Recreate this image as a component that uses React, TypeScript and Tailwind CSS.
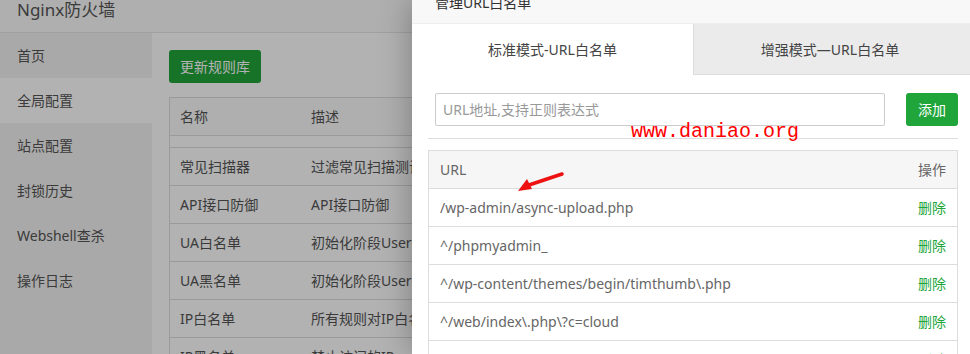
const FONT = { fontFamily: '"Noto Sans", "Noto Sans CJK SC", sans-serif' };

const MENU = ["首页", "全局配置", "站点配置", "封锁历史", "Webshell查杀", "操作日志"];

const RULES: [string, string][] = [
  ["常见扫描器", "过滤常见扫描测试工具的渗透测试"],
  ["API接口防御", "API接口防御"],
  ["UA白名单", "初始化阶段User-Agent白名单"],
  ["UA黑名单", "初始化阶段User-Agent黑名单"],
  ["IP白名单", "所有规则对IP白名单无效"],
  ["IP黑名单", "禁止访问的IP"],
];

const URLS = [
  "/wp-admin/async-upload.php",
  "^/phpmyadmin_",
  "^/wp-content/themes/begin/timthumb\\.php",
  "^/web/index\\.php\\?c=cloud",
  "^/admin/index\\.php",
];

function Background() {
  return (
    <div className="flex h-full w-full flex-col bg-white">
      <div className="h-[33px] shrink-0 border-b border-[#e5e5e5] bg-[#fbfbfb] pl-[17px] text-[17px] leading-[20px] text-[#555]">
        Nginx防火墙
      </div>
      <div className="flex flex-1">
        <div className="w-[152px] shrink-0 bg-[#f2f2f2]">
          {MENU.map((m, i) => (
            <div
              key={m}
              className={`h-[45px] pl-[17px] text-[14px] leading-[45px] text-[#555] ${i === 1 ? "bg-white" : ""}`}
            >
              {m}
            </div>
          ))}
        </div>
        <div className="flex-1 px-[17px] pt-[17px]">
          <button className="h-[33px] w-[92px] rounded-[3px] bg-[#20a53a] text-[14px] text-white">更新规则库</button>
          <div className="mt-[14px] border border-[#dddddd] text-[14px] text-[#555]">
            <div className="flex h-[38px] items-center border-b border-[#dddddd] bg-[#fbfbfb]">
              <div className="w-[131px] pl-[10px]">名称</div>
              <div className="pl-[10px]">描述</div>
            </div>
            <div className="h-[12px] border-b border-[#dddddd]" />
            {RULES.map(([n, d]) => (
              <div key={n} className="flex h-[38px] items-center border-b border-[#dddddd]">
                <div className="w-[131px] pl-[10px]">{n}</div>
                <div className="whitespace-nowrap pl-[10px]">{d}</div>
              </div>
            ))}
          </div>
        </div>
      </div>
    </div>
  );
}

function Modal() {
  return (
    <div className="absolute top-0 left-[412px] flex h-full w-[562px] flex-col bg-white shadow-[0_0_30px_rgba(0,0,0,0.3)]">
      <div className="h-[24px] shrink-0 overflow-hidden border-b border-[#eeeeee] bg-[#f8f8f8]">
        <div className="-mt-[18px] h-[42px] pl-[23px] text-[14px] leading-[42px] text-[#333]">管理URL白名单</div>
      </div>
      <div className="flex h-[51px] shrink-0 text-[14px] text-[#444]">
        <div className="flex w-[281px] items-center justify-center bg-white">标准模式-URL白名单</div>
        <div className="flex flex-1 items-center justify-center border-b border-l border-[#dddddd] bg-[#ebebeb] pr-[8px]">
          增强模式—URL白名单
        </div>
      </div>
      <div className="relative px-[16px]">
        <div className="mt-[18px] flex pl-[7px]">
          <input
            className="h-[33px] w-[450px] rounded-[2px] border border-[#cccccc] px-[7px] text-[14px] outline-none placeholder:text-[#999]"
            placeholder="URL地址,支持正则表达式"
          />
          <button className="ml-[21px] h-[33px] w-[52px] rounded-[3px] bg-[#20a53a] text-[14px] text-white">添加</button>
        </div>
        <div className="mt-[12px] border-t border-[#dddddd]" />
        <div className="mt-[11px] border border-[#dddddd] text-[14px] text-[#666]">
          <div className="flex h-[38px] items-center justify-between border-b border-[#dddddd] bg-[#f6f6f6] px-[11px]">
            <span>URL</span>
            <span>操作</span>
          </div>
          {URLS.map((u) => (
            <div key={u} className="flex h-[38px] items-center justify-between border-b border-[#dddddd] px-[11px]">
              <span>{u}</span>
              <span className="text-[#20a53a]">删除</span>
            </div>
          ))}
        </div>
        <div className="absolute top-[47px] left-[219px] font-['Liberation_Mono',monospace] text-[20px] leading-[20px] text-[#ff0000]">
          www.daniao.org
        </div>
        <svg className="absolute top-[95px] left-[90px]" width="70" height="30" viewBox="0 0 70 30">
          <line x1="60" y1="4" x2="24" y2="16" stroke="#ee1111" strokeWidth="3.5" strokeLinecap="round" />
          <polygon points="16,21 25,9 30,19" fill="#ee1111" />
        </svg>
      </div>
    </div>
  );
}

export default function App() {
  return (
    <div className="relative h-[354px] w-[970px] overflow-hidden" style={FONT}>
      <Background />
      <div className="absolute inset-0 bg-black/30" />
      <Modal />
    </div>
  );
}
